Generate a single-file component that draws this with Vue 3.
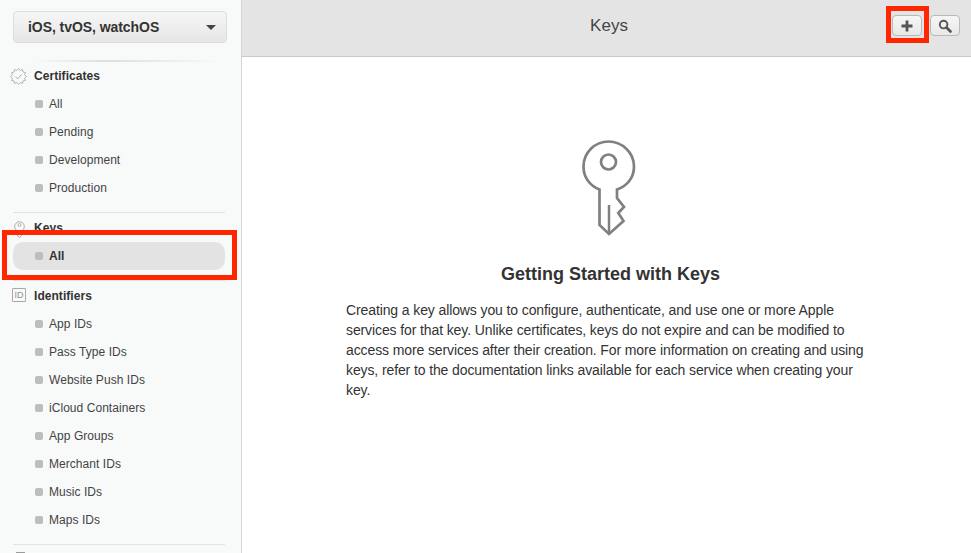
<template>
  <div class="page">
    <aside class="sidebar">
      <button class="platform">
        <span>iOS, tvOS, watchOS</span>
        <i class="caret"></i>
      </button>
      <div class="fade-line"></div>

      <section v-for="group in groups" :key="group.name" class="group">
        <div class="group-head">
          <span class="group-icon">
            <svg v-if="group.icon === 'cert'" viewBox="0 0 17 17" width="17" height="17">
              <polygon fill="none" stroke="#999" stroke-width="0.7" :points="badgePoints" />
              <path fill="none" stroke="#999" stroke-width="0.8" d="M5.500 8.700l2.200 2.200 4-4.500" />
            </svg>
            <svg v-else-if="group.icon === 'key'" viewBox="0 0 16 18" width="16" height="18">
              <path
                fill="none"
                stroke="#a3a3a3"
                stroke-width="0.9"
                d="M7.600 11C5.800 10.400 4.700 8.500 4.700 6.600c0-2.700 2.100-4.900 4.800-4.900s4.800 2.200 4.800 4.900c0 1.900-1.100 3.800-2.900 4.400V16l-1.900 1.300L7.600 16z"
              />
              <circle cx="9.500" cy="5" r="1.500" fill="none" stroke="#a3a3a3" stroke-width="0.8" />
            </svg>
            <span v-else-if="group.icon === 'id'" class="id-badge">ID</span>
          </span>
          <span class="group-name">{{ group.name }}</span>
        </div>
        <a
          v-for="item in group.items"
          :key="item"
          class="item"
          :class="{ active: group.name === 'Keys' }"
        >
          <i class="dot"></i>{{ item }}
        </a>
      </section>
      <div class="cut-icon"></div>
    </aside>

    <main class="main">
      <header class="topbar">
        <h1>Keys</h1>
        <div class="tools">
          <button class="tool">
            <svg viewBox="0 0 14 14" width="14" height="14">
              <path fill="#555" d="M5.600 1.500h2.800v4.100h4.100v2.800H8.400v4.100H5.600V8.400H1.500V5.600h4.100z" />
            </svg>
          </button>
          <button class="tool">
            <svg viewBox="0 0 14 14" width="14" height="14">
              <circle cx="5.600" cy="5.600" r="3.800" fill="none" stroke="#555" stroke-width="1.900" />
              <path d="M8.500 8.500l4 4" stroke="#555" stroke-width="2.600" stroke-linecap="round" />
            </svg>
          </button>
        </div>
      </header>

      <div class="intro">
        <svg class="big-key" viewBox="0 0 54 96" width="54" height="96">
          <path
            fill="none"
            stroke="#808080"
            stroke-width="2.700"
            d="M17.500 49.500C8 46 1.500 37.500 1.500 26.500 1.500 12.500 13 1.500 26.500 1.500S52 12.500 52 26.500c0 11-6.500 19.500-17 23V58l7 9-5.700 6 5.200 8L27 94l-9.500-9z"
          />
          <circle cx="26.500" cy="22" r="7.500" fill="none" stroke="#808080" stroke-width="2.700" />
          <path d="M27 65v29" fill="none" stroke="#808080" stroke-width="2.500" />
        </svg>
        <h2>Getting Started with Keys</h2>
        <p>
          Creating a key allows you to configure, authenticate, and use one or more Apple
          services for that key. Unlike certificates, keys do not expire and can be modified to
          access more services after their creation. For more information on creating and using
          keys, refer to the documentation links available for each service when creating your
          key.
        </p>
      </div>
    </main>

    <div class="mark mark-row"></div>
    <div class="mark mark-add"></div>
  </div>
</template>

<script setup>
const groups = [
  { name: 'Certificates', icon: 'cert', items: ['All', 'Pending', 'Development', 'Production'] },
  { name: 'Keys', icon: 'key', items: ['All'] },
  {
    name: 'Identifiers',
    icon: 'id',
    items: [
      'App IDs',
      'Pass Type IDs',
      'Website Push IDs',
      'iCloud Containers',
      'App Groups',
      'Merchant IDs',
      'Music IDs',
      'Maps IDs',
    ],
  },
];

// spiky seal outline for the certificates icon
const badgePoints = Array.from({ length: 24 }, (_, i) => {
  const r = i % 2 ? 6.3 : 8;
  const a = (i * Math.PI) / 12;
  return `${(8.5 + r * Math.cos(a)).toFixed(2)},${(8.5 + r * Math.sin(a)).toFixed(2)}`;
}).join(' ');
</script>

<style>
html,
body {
  margin: 0;
  overflow: hidden;
}
</style>

<style scoped>
.page {
  position: relative;
  display: flex;
  width: 971px;
  height: 553px;
  overflow: hidden;
  font-family: 'Liberation Sans', Arial, sans-serif;
  color: #333;
  background: #fff;
}

.sidebar {
  flex: none;
  box-sizing: border-box;
  width: 242px;
  padding: 11px 16px 0 13px;
  background: #f8f9f9;
  border-right: 1px solid #d6d6d6;
}

.platform {
  display: flex;
  align-items: center;
  justify-content: space-between;
  box-sizing: border-box;
  width: 214px;
  height: 32px;
  padding: 0 10px 0 14px;
  border: 1px solid #dcdcdc;
  border-radius: 4px;
  background: linear-gradient(#f6f6f6, #e6e6e6);
  font-family: inherit;
  font-size: 14px;
  font-weight: 700;
  letter-spacing: -0.06px;
  color: #333;
}

.caret {
  width: 0;
  height: 0;
  border-left: 5px solid transparent;
  border-right: 5px solid transparent;
  border-top: 5px solid #444;
}

.fade-line {
  height: 2px;
  margin: 17px 6px 0 20px;
  background: linear-gradient(90deg, #f8f9f9, #dedede 40%, #f8f9f9);
}

.group {
  width: 212px;
  padding: 0 0 10px;
  margin-bottom: 1px;
  border-bottom: 1px solid #e2e3e3;
}

.group-head {
  position: relative;
  display: flex;
  align-items: center;
  height: 28px;
}

.group-icon {
  position: absolute;
  left: -3px;
  top: 6px;
  display: flex;
}

.id-badge {
  box-sizing: border-box;
  width: 14px;
  height: 14px;
  margin-left: 2px;
  border: 1px solid #a8a8a8;
  border-radius: 1px;
  font-size: 9px;
  line-height: 12px;
  text-align: center;
  color: #8f8f8f;
}

.group-name {
  margin-left: 21px;
  font-size: 12px;
  font-weight: 700;
  letter-spacing: 0.05px;
}

.item {
  display: flex;
  align-items: center;
  height: 28px;
  font-size: 12px;
  letter-spacing: 0.05px;
  color: #444;
}

.item.active {
  background: #e3e3e3;
  border-radius: 10px;
  font-weight: 700;
  color: #333;
}

.dot {
  width: 8px;
  height: 8px;
  margin: 0 6px 0 22px;
  border-radius: 2px;
  background: #bdbdbd;
}

.cut-icon {
  width: 9px;
  height: 6px;
  margin: 7px 0 0 3px;
  background: #9b9b9b;
}

.main {
  flex: 1;
  min-width: 0;
}

.topbar {
  position: relative;
  display: flex;
  align-items: center;
  justify-content: center;
  box-sizing: border-box;
  height: 57px;
  padding: 0 0 5px 5px;
  background: #e4e4e4;
  border-bottom: 1px solid #c9c9c9;
}

.topbar h1 {
  margin: 0;
  font-size: 17px;
  font-weight: 400;
  color: #444;
}

.tools {
  position: absolute;
  top: 15px;
  right: 11px;
  display: flex;
  gap: 8px;
}

.tool {
  display: flex;
  align-items: center;
  justify-content: center;
  box-sizing: border-box;
  width: 30px;
  height: 21px;
  padding: 0;
  border: 1px solid #b9b9b9;
  border-radius: 4px;
  background: linear-gradient(#f6f6f6, #e8e8e8);
}

.intro {
  width: 526px;
  margin-left: 104px;
  padding-top: 83px;
}

.big-key {
  display: block;
  margin: 0 auto;
}

.intro h2 {
  margin: 26px 0 0;
  padding-left: 3px;
  font-size: 18px;
  line-height: 24px;
  font-weight: 700;
  text-align: center;
  color: #333;
}

.intro p {
  margin: 14px 0 0;
  font-size: 14px;
  line-height: 20px;
  letter-spacing: -0.11px;
  color: #333;
}

.mark {
  position: absolute;
  box-sizing: border-box;
  border: 5px solid #ff2600;
}

.mark-row {
  left: 2px;
  top: 230px;
  width: 235px;
  height: 50px;
}

.mark-add {
  left: 886px;
  top: 6px;
  width: 43px;
  height: 37px;
}
</style>
